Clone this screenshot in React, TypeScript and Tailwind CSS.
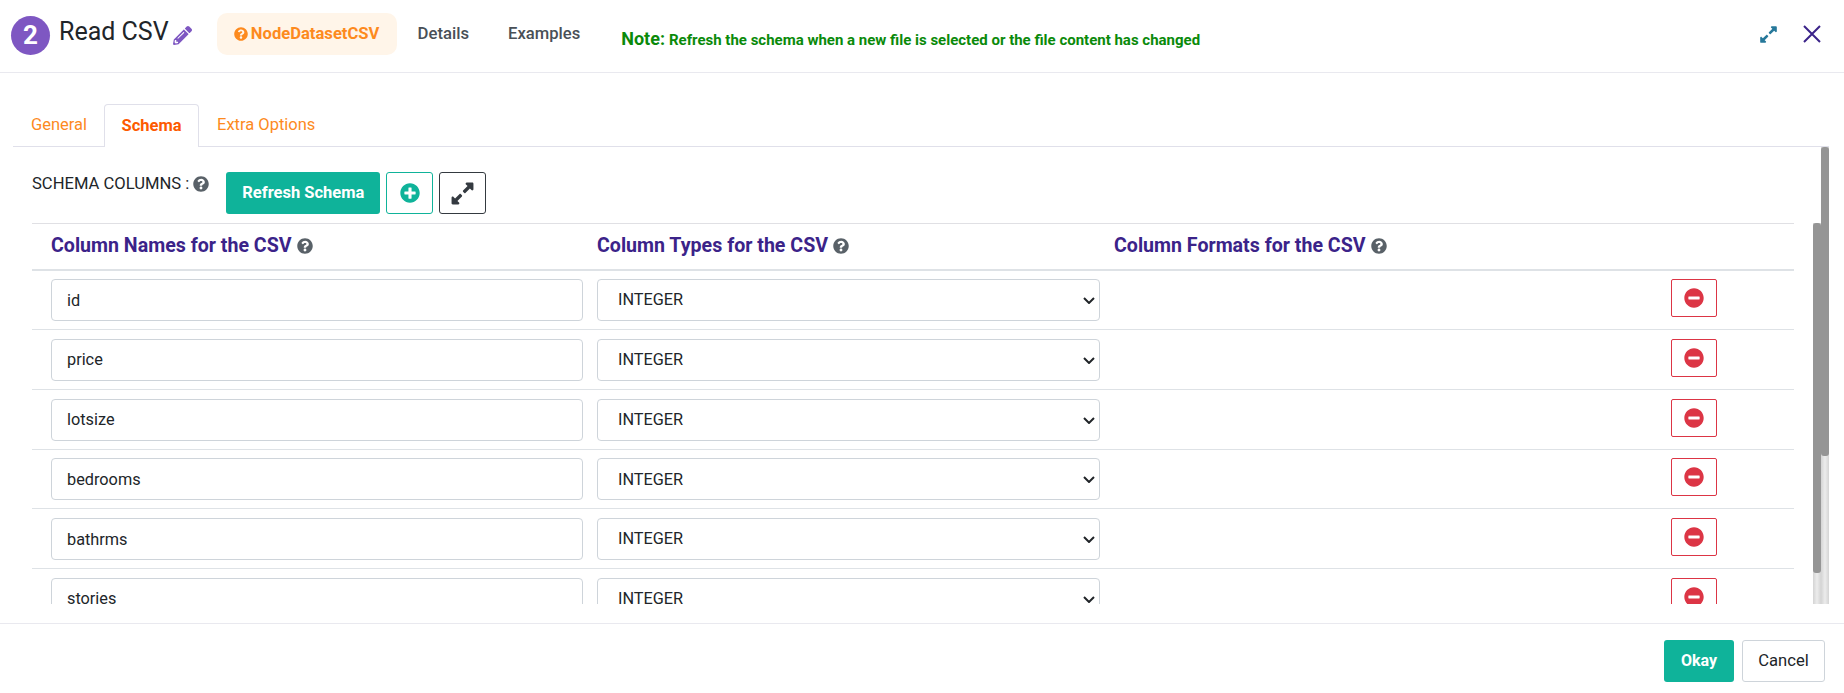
import React from "react";
import { FaQuestionCircle, FaPlusCircle, FaMinusCircle, FaExpandAlt, FaPencilAlt } from "react-icons/fa";

const rows = ["id", "price", "lotsize", "bedrooms", "bathrms", "stories", "mainroad"];

function Track() {
  return <div className="h-full w-[8px] shrink-0 bg-gradient-to-r from-[#d4d4d4] via-[#ececec] to-[#d4d4d4]" />;
}

function Head({ label, className }: { label: string; className: string }) {
  return (
    <div className={`flex -translate-y-[1px] items-center gap-[5px] text-[19.6px] font-bold leading-none text-[#3b2389] ${className}`}>
      <span>{label}</span>
      <FaQuestionCircle className="h-[16px] w-[16px] text-[#596168]" />
    </div>
  );
}

export default function App() {
  return (
    <div className="flex h-[693px] w-[1844px] flex-col overflow-hidden bg-white font-['Roboto',sans-serif] text-[#212529]">
      <header className="flex h-[73px] shrink-0 items-center border-b border-[#e9e9ef] pl-[11px] pr-[23px]">
        <div className="flex h-[39px] w-[39px] shrink-0 -translate-y-[1px] items-center justify-center rounded-full bg-[#7e57c2] text-[26px] font-bold text-white">2</div>
        <span className="ml-[9px] -translate-y-[5px] text-[25px] leading-none">Read CSV</span>
        <FaPencilAlt className="ml-[4px] h-[19px] w-[19px] -translate-y-[1px] text-[#7e57c2]" />
        <div className="ml-[25px] flex h-[42px] w-[180px] -translate-y-[2px] items-center justify-center gap-[3px] rounded-[10px] bg-[#fff5e9] text-[16.6px] font-bold text-[#fd8a1e]">
          <FaQuestionCircle className="h-[14px] w-[14px]" />
          <span>NodeDatasetCSV</span>
        </div>
        <span className="ml-[21px] -translate-y-[2px] text-[16.7px] font-medium text-[#495057]">Details</span>
        <span className="ml-[39px] -translate-y-[2px] text-[16.6px] font-medium text-[#495057]">Examples</span>
        <div className="ml-[41px] flex translate-y-[2px] items-baseline gap-[4px] font-bold text-[#0a8a0a]">
          <span className="text-[18px]">Note:</span>
          <span className="text-[15px]">Refresh the schema when a new file is selected or the file content has changed</span>
        </div>
        <div className="ml-auto flex -translate-y-[2px] items-center gap-[25px]">
          <FaExpandAlt className="h-[19px] w-[19px] text-[#26789a]" />
          <svg viewBox="0 0 18 18" className="h-[18px] w-[18px] text-[#3b2389]" fill="none" stroke="currentColor" strokeWidth="2">
            <path d="M1 1l16 16M17 1L1 17" />
          </svg>
        </div>
      </header>

      <div className="mx-[13px] mt-[31px] flex h-[43px] w-[1816px] shrink-0 items-end border-b border-[#e0e0ea] text-[16.5px] text-[#fd8a1e]">
        <span className="flex h-[42px] w-[91px] items-center pl-[18px]">General</span>
        <span className="-mb-px flex h-[43px] w-[95px] items-center justify-center rounded-t-[4px] border border-b-0 border-[#e0e0ea] bg-white font-bold text-[#fd5a00]">Schema</span>
        <span className="flex h-[42px] items-center pl-[18px]">Extra Options</span>
      </div>

      <div className="ml-[13px] flex h-[457px] w-[1816px] shrink-0">
        <div className="flex min-w-0 flex-1 flex-col">
          <div className="flex h-[76px] shrink-0 pl-[19px]">
            <div className="mt-[28px] flex h-[18px] items-center gap-[4px] text-[16.6px] leading-none">
              <span>SCHEMA COLUMNS :</span>
              <FaQuestionCircle className="h-[16px] w-[16px] text-[#596168]" />
            </div>
            <button className="ml-[17px] mt-[25px] h-[42px] w-[154px] rounded-[3px] bg-[#0fb39a] text-[16.5px] font-bold text-white">Refresh Schema</button>
            <button className="ml-[6px] mt-[25px] flex h-[42px] w-[47px] items-center justify-center rounded-[3px] border border-[#0fb39a]">
              <FaPlusCircle className="h-[20px] w-[20px] text-[#0fb39a]" />
            </button>
            <button className="ml-[6px] mt-[25px] flex h-[42px] w-[47px] items-center justify-center rounded-[3px] border border-[#343a40]">
              <FaExpandAlt className="h-[25px] w-[25px] text-[#343a40]" />
            </button>
          </div>
          <div className="flex min-h-0 flex-1">
            <div className="min-w-0 flex-1 overflow-hidden pr-[19px] pl-[19px]">
              <div className="flex h-[48px] items-center border-b-[2px] border-t-[1px] border-b-[#dee2e6] border-t-[#e0e0e4]">
                <Head label="Column Names for the CSV" className="ml-[19px] w-[546px]" />
                <Head label="Column Types for the CSV" className="w-[517px]" />
                <Head label="Column Formats for the CSV" className="" />
              </div>
              <div className="-mt-[0.7px]">
                {rows.map((r) => (
                  <div key={r} className="flex h-[59.75px] items-start border-b border-[#dee2e6] pt-[8.7px]">
                    <input
                      readOnly
                      value={r}
                      className="ml-[19px] h-[42px] w-[532px] rounded-[4px] border border-[#ced4da] bg-white px-[15px] text-[16.3px] text-[#212529] outline-none"
                    />
                    <div className="relative ml-[14px] h-[42px] w-[503px]">
                      <select className="h-full w-full appearance-none rounded-[4px] border border-[#ced4da] bg-white pl-[20px] pr-[24px] pt-[1px] text-[16.3px] text-[#212529] outline-none">
                        <option>INTEGER</option>
                        <option>STRING</option>
                      </select>
                      <svg viewBox="0 0 12 7" className="pointer-events-none absolute right-[5px] top-[18px] h-[7px] w-[12px]" fill="none" stroke="#212529" strokeWidth="2">
                        <path d="M1 1l5 5 5-5" />
                      </svg>
                    </div>
                    <button className="ml-[571px] flex h-[38px] w-[46px] items-center justify-center rounded-[2px] border border-[#dc3545]">
                      <FaMinusCircle className="h-[20px] w-[20px] text-[#dc3545]" />
                    </button>
                  </div>
                ))}
              </div>
            </div>
            <div className="relative h-full w-[8px] shrink-0">
              <Track />
              <div className="absolute left-0 top-0 h-[350px] w-[8px] rounded-[3px] bg-[#959595]" />
            </div>
          </div>
        </div>
        <div className="relative h-full w-[8px] shrink-0">
          <Track />
          <div className="absolute left-0 top-0 h-[309px] w-[8px] rounded-[3px] bg-[#959595]" />
        </div>
      </div>

      <footer className="mt-[19px] flex h-[71px] shrink-0 items-start justify-end gap-[8px] border-t border-[#e9e9ef] pt-[16px] pr-[19px]">
        <button className="h-[42px] w-[70px] rounded-[3px] bg-[#0fb39a] text-[16px] font-bold text-white">Okay</button>
        <button className="h-[42px] w-[83px] rounded-[3px] border border-[#ced4da] bg-white text-[16.6px] font-normal text-[#212529]">Cancel</button>
      </footer>
    </div>
  );
}
